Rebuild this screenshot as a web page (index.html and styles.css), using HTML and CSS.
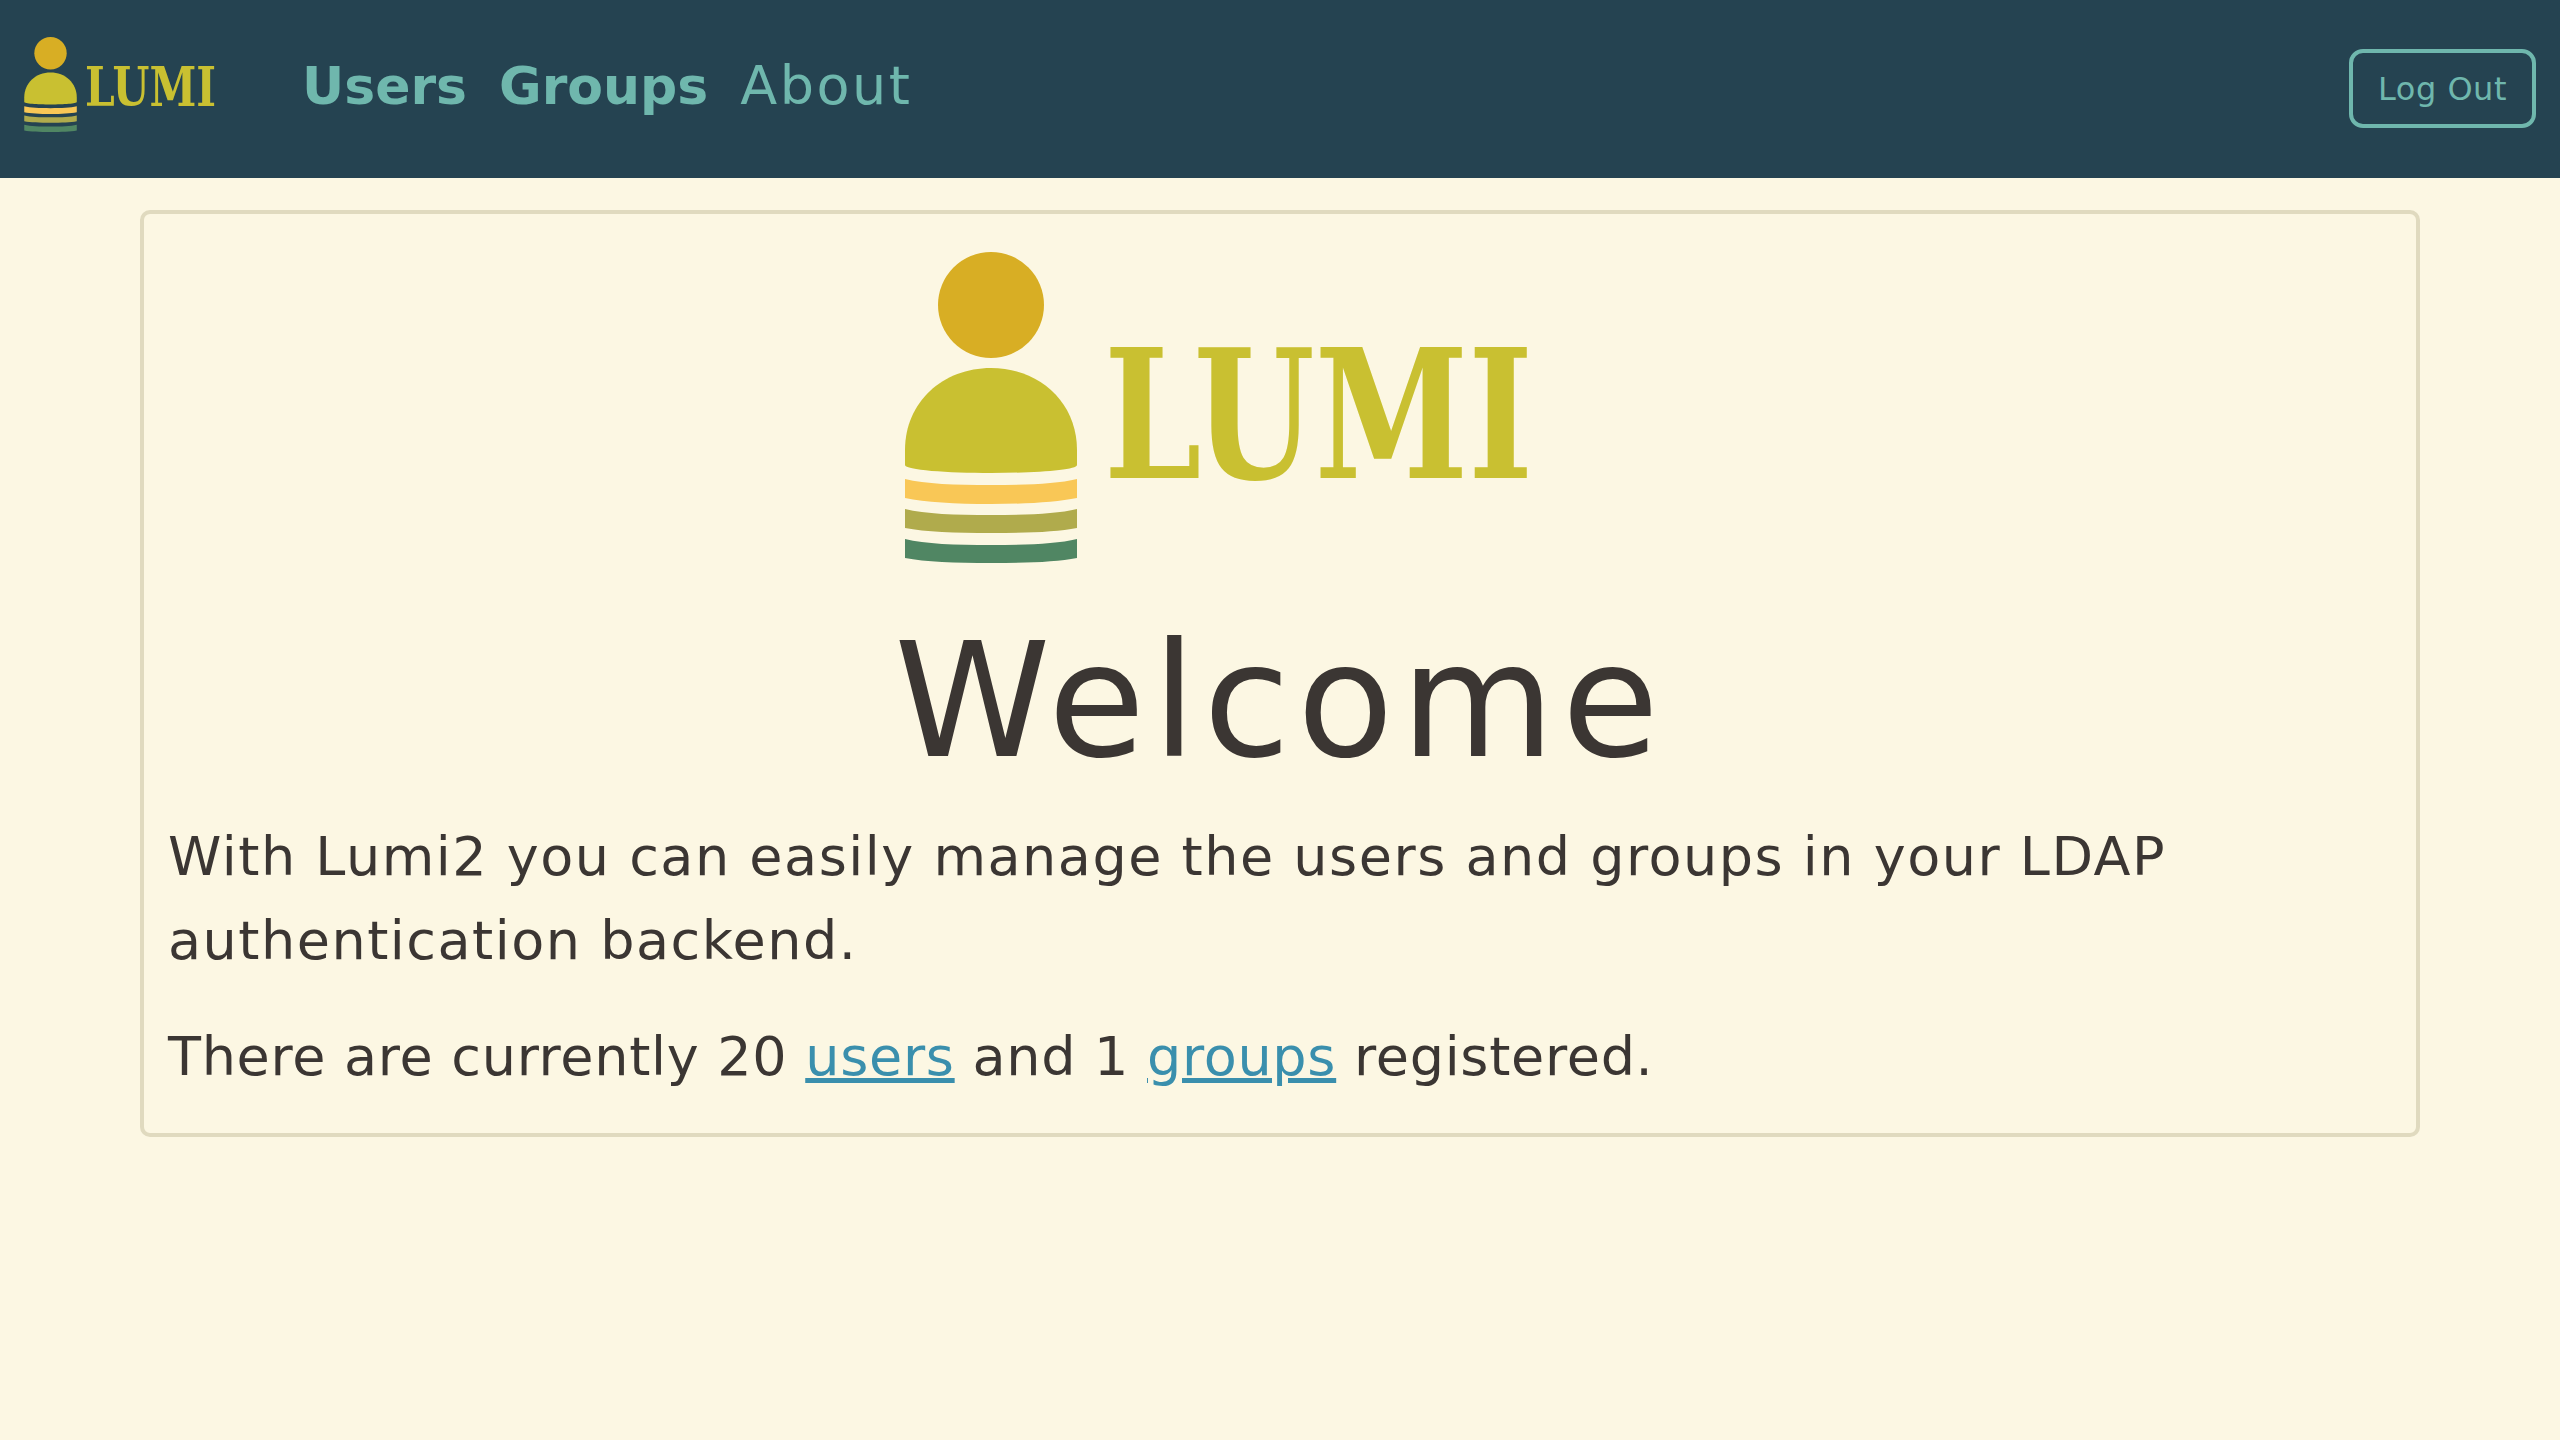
FILE: index.html
```html
<!DOCTYPE html>
<html>
<head>
  <link rel="stylesheet" href="styles.css">
</head>
<body>
  <div class="header">
    <svg class="header-logo" viewBox="0 0 640 311">
      <circle cx="86" cy="53" r="53" fill="#d8ae24" />
      <path d="M0 213V198C0 150 38 116 86 116C134 116 172 150 172 198V213C172 218 130 221 86 221C42 221 0 218 0 213Z" fill="#c9c031" />
      <path d="M0 227C20 232 50 233 86 233C122 233 152 232 172 227V246C152 250 122 252 86 252C50 252 20 250 0 246Z" fill="#f9c756" />
      <path d="M0 257C20 262 50 263 86 263C122 263 152 262 172 257V276C152 280 122 281 86 281C50 281 20 280 0 276Z" fill="#b0ab4c" />
      <path d="M0 287C20 292 50 293 86 293C122 293 152 292 172 287V306C152 310 122 311 86 311C50 311 20 310 0 306Z" fill="#508663" />
      <text class="logo-text" transform="translate(199 226) scale(0.77 1)">LUMI</text>
    </svg>
    <div class="nav">
      <a class="nav-link active" href="#">Users</a>
      <a class="nav-link active" href="#">Groups</a>
      <a class="nav-link" href="#">About</a>
    </div>
    <button class="logout">Log Out</button>
  </div>

  <div class="card">
    <svg class="card-logo" viewBox="0 0 750 311">
      <circle cx="86" cy="53" r="53" fill="#d8ae24" />
      <path d="M0 213V198C0 150 38 116 86 116C134 116 172 150 172 198V213C172 218 130 221 86 221C42 221 0 218 0 213Z" fill="#c9c031" />
      <path d="M0 227C20 232 50 233 86 233C122 233 152 232 172 227V246C152 250 122 252 86 252C50 252 20 250 0 246Z" fill="#f9c756" />
      <path d="M0 257C20 262 50 263 86 263C122 263 152 262 172 257V276C152 280 122 281 86 281C50 281 20 280 0 276Z" fill="#b0ab4c" />
      <path d="M0 287C20 292 50 293 86 293C122 293 152 292 172 287V306C152 310 122 311 86 311C50 311 20 310 0 306Z" fill="#508663" />
      <text class="logo-text" transform="translate(199 226) scale(0.77 1)">LUMI</text>
    </svg>
    <h1>Welcome</h1>
    <p class="intro">With Lumi2 you can easily manage the users and groups in your LDAP authentication backend.</p>
    <p class="counts">There are currently 20 <a href="#">users</a> and 1 <a href="#">groups</a> registered.</p>
  </div>
</body>
</html>
```

FILE: styles.css
```css
body {
  margin: 0;
  min-height: 1440px;
  background: #fcf7e3;
  color: #3b3633;
  font-family: "DejaVu Sans", sans-serif;
  font-size: 54px;
  line-height: 84px;
}

.header {
  height: 178px;
  background: #254351;
  display: flex;
  align-items: flex-start;
  padding: 0 24px;
  box-sizing: border-box;
}

.header-logo {
  width: 196px;
  height: 95px;
  flex: none;
  margin-top: 37px;
}

.logo-text {
  font-family: "DejaVu Serif", serif;
  font-weight: 700;
  font-size: 180px;
  fill: #c9c031;
}

.nav {
  display: flex;
  align-items: baseline;
  gap: 32px;
  margin-left: 82px;
  margin-top: 44px;
}

.nav-link {
  color: #6fb7ad;
  font-size: 54px;
  letter-spacing: 2.5px;
  text-decoration: none;
}

.nav-link.active {
  font-size: 52px;
  font-weight: 700;
  letter-spacing: 0;
}

.logout {
  margin-left: auto;
  margin-top: 49px;
  width: 187px;
  height: 79px;
  background: none;
  border: 4px solid #6fb7ad;
  border-radius: 14px;
  color: #6fb7ad;
  font-family: "DejaVu Sans", sans-serif;
  font-size: 32px;
  letter-spacing: 0.5px;
  padding: 0;
}

.card {
  margin: 32px 140px 0;
  padding: 38px 24px 34px;
  border: 4px solid #e0dabf;
  border-radius: 10px;
}

.card-logo {
  display: block;
  width: 750px;
  height: 311px;
  margin: 0 auto;
}

h1 {
  margin: 42px 0 18px;
  text-align: center;
  font-size: 158px;
  font-weight: 400;
  letter-spacing: 7px;
  line-height: 192px;
}

p {
  margin: 0 0 32px;
}

.intro {
  letter-spacing: 1.5px;
}

.counts {
  margin-bottom: 0;
  letter-spacing: 0.7px;
}

p a {
  color: #3a8fad;
}
```
